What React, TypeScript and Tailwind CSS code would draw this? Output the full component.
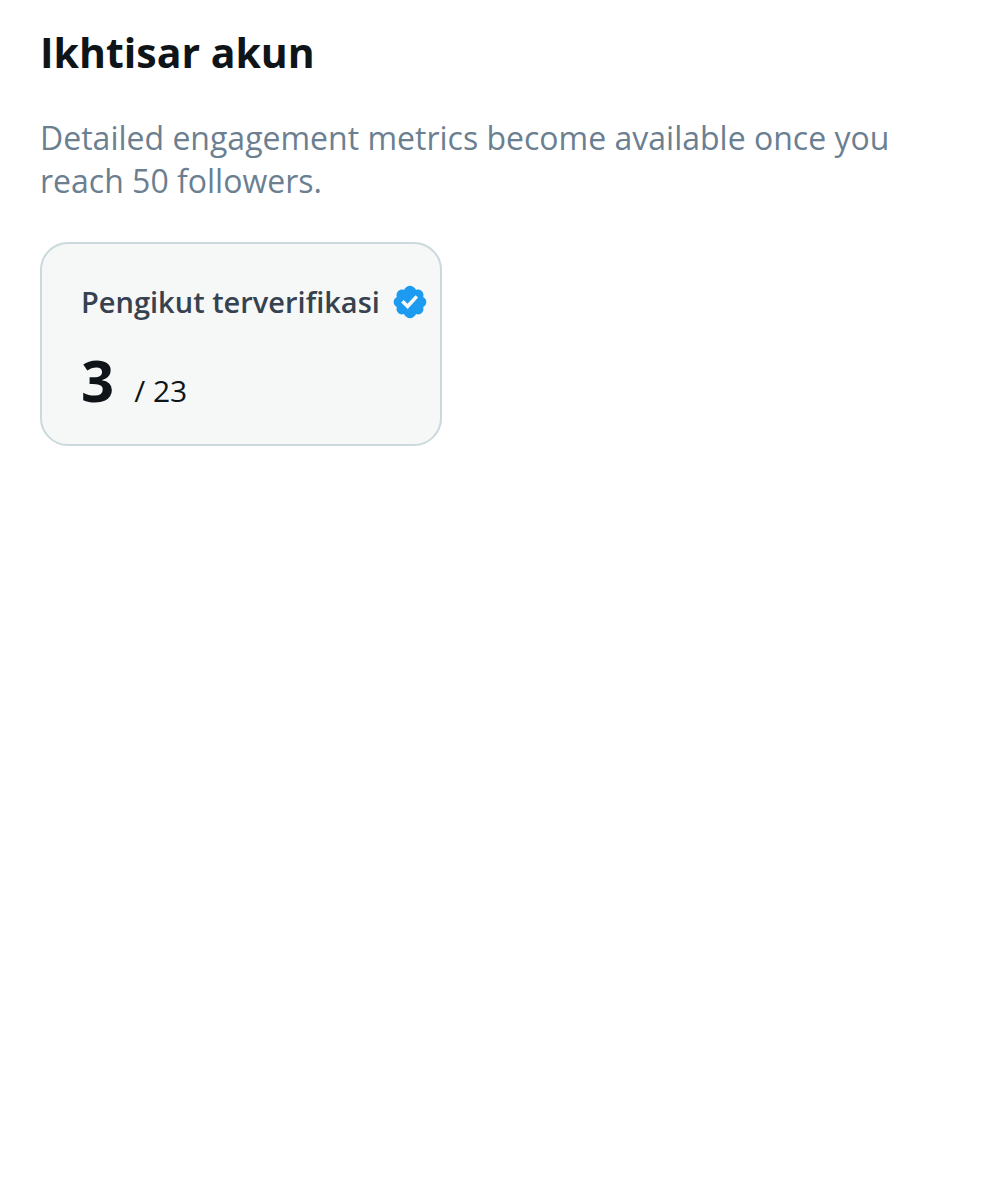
interface Metric {
  label: string
  value: number
  total: number
}

const metrics: Metric[] = [{ label: 'Pengikut terverifikasi', value: 3, total: 23 }]

function VerifiedBadge() {
  return (
    <svg viewBox="0 0 24 24" className="size-10 shrink-0" role="img" aria-label="Verified">
      <path
        fill="#1d9bf0"
        fillRule="evenodd"
        d="M21.8 12c0-1.3-.75-2.4-1.9-3 .4-1.25.15-2.6-.75-3.5s-2.25-1.15-3.5-.75C14.95 3.2 13.4 2.2 12 2.2s-2.95 1-3.65 2.55c-1.25-.4-2.6-.15-3.5.75S3.7 7.75 4.1 9c-1.15.6-1.9 1.7-1.9 3s.75 2.4 1.9 3c-.4 1.25-.15 2.6.75 3.5s2.25 1.15 3.5.75c.7 1.55 2.25 2.55 3.65 2.55s2.95-1 3.65-2.55c1.25.4 2.6.15 3.5-.75s1.15-2.25.75-3.5c1.15-.6 1.9-1.7 1.9-3zM10.6 16.2l-3.9-3.9 1.5-1.5 2.3 2.3 4.8-5.2 1.6 1.45z"
      />
    </svg>
  )
}

function MetricCard({ label, value, total }: Metric) {
  return (
    <div className="rounded-[28px] border-2 border-[#cbd9dd] bg-[#f6f8f7] pt-9 pr-2.5 pb-7 pl-[39px]">
      <div className="flex items-center gap-2.5">
        <h2 className="text-[29px] leading-11 font-semibold text-[#36424f]">{label}</h2>
        <VerifiedBadge />
      </div>
      <p className="mt-5 flex items-baseline gap-5">
        <span className="text-[58px] leading-18 font-bold">{value}</span>
        <span className="text-[30px]">/ {total}</span>
      </p>
    </div>
  )
}

export default function App() {
  return (
    <main className="min-h-screen bg-white px-10 pt-6 font-['Open_Sans',sans-serif] text-[#0f1419]">
      <h1 className="text-[41px] leading-14 font-bold">Ikhtisar akun</h1>
      <p className="mt-9 text-[32px] leading-[43px] text-[#6b7f91]">
        Detailed engagement metrics become available once you reach 50 followers.
      </p>
      <div className="mt-10 flex flex-wrap gap-6">
        {metrics.map((metric) => (
          <MetricCard key={metric.label} {...metric} />
        ))}
      </div>
    </main>
  )
}
